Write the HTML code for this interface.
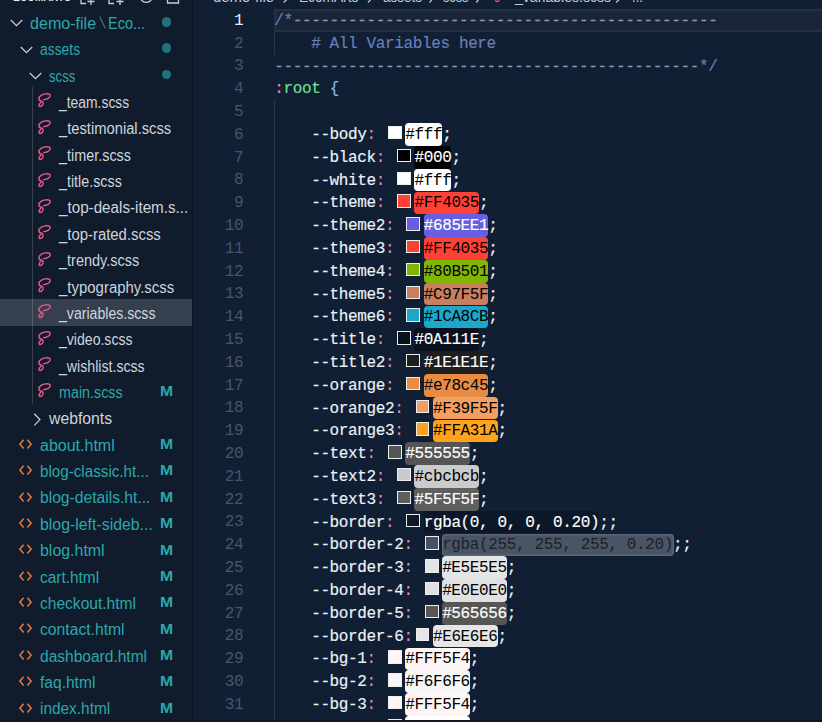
<!DOCTYPE html>
<html><head><meta charset="utf-8"><style>
*{margin:0;padding:0;box-sizing:border-box}
html,body{width:822px;height:722px;overflow:hidden;background:#101f34}
body{position:relative;font-family:"Liberation Sans",sans-serif}
#side{position:absolute;left:0;top:0;width:192px;height:722px;background:#101b2b;overflow:hidden}
#sep{position:absolute;left:192px;top:0;width:1px;height:722px;background:#0c1522}
#band{position:absolute;left:193px;top:0;width:8px;height:722px;background:#121e31}
#ed{position:absolute;left:193px;top:0;width:629px;height:722px;background:#101f34;overflow:hidden}
.row{position:absolute;left:0;width:191px;height:26.4px;font-size:15.6px;line-height:26.4px;white-space:nowrap;color:#cdd5de}
.selbg{position:absolute;left:0;width:192px;height:27px;background:#363f4d}
.row .t{position:absolute;top:2.5px}
.teal{color:#2ca8ad}
.dot{position:absolute;left:161.5px;top:8.8px;width:9.5px;height:9.5px;border-radius:50%;background:#1f747b}
.M{position:absolute;left:160px;top:0.9px;font-weight:bold;font-size:14.3px;color:#2ca8ad;transform:scaleX(1.1);transform-origin:0 0}
.ln{position:absolute;left:0;width:243.1px;text-align:right;font-family:"Liberation Mono",monospace;font-size:16px;letter-spacing:-0.42px;line-height:22.8px;color:#4a5568}
.ln.cur{color:#e8edf2}
.cl{position:absolute;left:274.2px;height:22.8px;font-family:"Liberation Mono",monospace;font-size:16px;letter-spacing:-0.366px;line-height:22.8px;white-space:pre;color:#d6deeb;-webkit-text-stroke:0.15px}
.cl .in{position:relative;top:0.8px}
.cm{color:#6980b8}
.dash{color:#8f9bb0}
.pk{color:#dd8cb8}
.gr{color:#6fe08a}
.bl{color:#86b6f2}
.vn{color:#eef2f6}
.sw{display:inline-block;vertical-align:top;width:13.4px;height:13.4px;margin:3px 3.4px 0 3.4px;border:1.7px solid #eee}
.hl{display:inline-block;vertical-align:top;height:22.8px;border-radius:3px}
.guide{position:absolute;width:1px;background:#2a3548}
</style></head>
<body>
<div id="side"><div style="position:absolute;left:13.4px;top:-8.7px;font-size:13px;font-weight:bold;color:#e6ebf0;line-height:11px;transform:scaleX(0.78);transform-origin:0 0">ECOMARTS</div><svg width="191" height="8" style="position:absolute;left:0;top:0"><g fill="none" stroke="#c5cdd6" stroke-width="1.3"><path d="M81 -4 V3.5 H86"/><path d="M91 -2 V5 M87.5 1.5 H94.5"/><path d="M109 -4 V3.5 H114"/><path d="M120 -2 V5 M116.5 1.5 H123.5"/><path d="M140.5 -2 A6 6 0 0 0 152 -2"/><path d="M167.5 -4 V3 H178.5 V-4"/></g></svg><div class="row" style="top:8.30px"><svg width="13" height="8" viewBox="0 0 13 8" style="position:absolute;top:10.9px;left:10.0px"><path d="M0.8 1 L6.5 6.7 L12.2 1" fill="none" stroke="#c5cdd6" stroke-width="1.3"/></svg><span class="t teal" style="left:29.80px;transform:scaleX(1.031);transform-origin:0 0">demo-file</span><svg width="10" height="20" style="position:absolute;left:97px;top:6px"><path d="M2.6 2.4 L8.4 14.6" stroke="#5a6575" stroke-width="1.2"/></svg><span class="t teal" style="left:107.5px;transform:scaleX(0.93);transform-origin:0 0">Eco...</span><span class="dot"></span></div><div class="row" style="top:34.67px"><svg width="13" height="8" viewBox="0 0 13 8" style="position:absolute;top:10.9px;left:19.5px"><path d="M0.8 1 L6.5 6.7 L12.2 1" fill="none" stroke="#c5cdd6" stroke-width="1.3"/></svg><span class="t teal" style="left:39.50px;transform:scaleX(0.891);transform-origin:0 0">assets</span><span class="dot"></span></div><div class="row" style="top:61.04px"><svg width="13" height="8" viewBox="0 0 13 8" style="position:absolute;top:10.9px;left:29.0px"><path d="M0.8 1 L6.5 6.7 L12.2 1" fill="none" stroke="#c5cdd6" stroke-width="1.3"/></svg><span class="t teal" style="left:48.80px;transform:scaleX(0.843);transform-origin:0 0">scss</span><span class="dot"></span></div><div class="row" style="top:87.41px"><svg width="20" height="24" viewBox="0 0 20 24" style="position:absolute;left:34px;top:0"><path d="M9.6 12.6 C12.6 12.4 16.6 10.8 16.2 8.4 C15.8 6.2 10.6 6.2 7.4 8.2 C4 10.4 4.2 13.8 7.6 14.2 C6.2 15.6 4.9 17.2 5.1 18.7 C5.3 20.1 7.3 19.7 8.5 18 C9.5 16.5 9.3 14.9 7.6 14.2" fill="none" stroke="#e2578a" stroke-width="1.45" stroke-linecap="round"/></svg><span class="t" style="left:59.40px;transform:scaleX(0.891);transform-origin:0 0">_team.scss</span></div><div class="row" style="top:113.78px"><svg width="20" height="24" viewBox="0 0 20 24" style="position:absolute;left:34px;top:0"><path d="M9.6 12.6 C12.6 12.4 16.6 10.8 16.2 8.4 C15.8 6.2 10.6 6.2 7.4 8.2 C4 10.4 4.2 13.8 7.6 14.2 C6.2 15.6 4.9 17.2 5.1 18.7 C5.3 20.1 7.3 19.7 8.5 18 C9.5 16.5 9.3 14.9 7.6 14.2" fill="none" stroke="#e2578a" stroke-width="1.45" stroke-linecap="round"/></svg><span class="t" style="left:59.40px;transform:scaleX(0.945);transform-origin:0 0">_testimonial.scss</span></div><div class="row" style="top:140.15px"><svg width="20" height="24" viewBox="0 0 20 24" style="position:absolute;left:34px;top:0"><path d="M9.6 12.6 C12.6 12.4 16.6 10.8 16.2 8.4 C15.8 6.2 10.6 6.2 7.4 8.2 C4 10.4 4.2 13.8 7.6 14.2 C6.2 15.6 4.9 17.2 5.1 18.7 C5.3 20.1 7.3 19.7 8.5 18 C9.5 16.5 9.3 14.9 7.6 14.2" fill="none" stroke="#e2578a" stroke-width="1.45" stroke-linecap="round"/></svg><span class="t" style="left:59.40px;transform:scaleX(0.923);transform-origin:0 0">_timer.scss</span></div><div class="row" style="top:166.52px"><svg width="20" height="24" viewBox="0 0 20 24" style="position:absolute;left:34px;top:0"><path d="M9.6 12.6 C12.6 12.4 16.6 10.8 16.2 8.4 C15.8 6.2 10.6 6.2 7.4 8.2 C4 10.4 4.2 13.8 7.6 14.2 C6.2 15.6 4.9 17.2 5.1 18.7 C5.3 20.1 7.3 19.7 8.5 18 C9.5 16.5 9.3 14.9 7.6 14.2" fill="none" stroke="#e2578a" stroke-width="1.45" stroke-linecap="round"/></svg><span class="t" style="left:59.40px;transform:scaleX(0.917);transform-origin:0 0">_title.scss</span></div><div class="row" style="top:192.89px"><svg width="20" height="24" viewBox="0 0 20 24" style="position:absolute;left:34px;top:0"><path d="M9.6 12.6 C12.6 12.4 16.6 10.8 16.2 8.4 C15.8 6.2 10.6 6.2 7.4 8.2 C4 10.4 4.2 13.8 7.6 14.2 C6.2 15.6 4.9 17.2 5.1 18.7 C5.3 20.1 7.3 19.7 8.5 18 C9.5 16.5 9.3 14.9 7.6 14.2" fill="none" stroke="#e2578a" stroke-width="1.45" stroke-linecap="round"/></svg><span class="t" style="left:59.40px;transform:scaleX(0.975);transform-origin:0 0">_top-deals-item.s...</span></div><div class="row" style="top:219.26px"><svg width="20" height="24" viewBox="0 0 20 24" style="position:absolute;left:34px;top:0"><path d="M9.6 12.6 C12.6 12.4 16.6 10.8 16.2 8.4 C15.8 6.2 10.6 6.2 7.4 8.2 C4 10.4 4.2 13.8 7.6 14.2 C6.2 15.6 4.9 17.2 5.1 18.7 C5.3 20.1 7.3 19.7 8.5 18 C9.5 16.5 9.3 14.9 7.6 14.2" fill="none" stroke="#e2578a" stroke-width="1.45" stroke-linecap="round"/></svg><span class="t" style="left:59.40px;transform:scaleX(0.955);transform-origin:0 0">_top-rated.scss</span></div><div class="row" style="top:245.63px"><svg width="20" height="24" viewBox="0 0 20 24" style="position:absolute;left:34px;top:0"><path d="M9.6 12.6 C12.6 12.4 16.6 10.8 16.2 8.4 C15.8 6.2 10.6 6.2 7.4 8.2 C4 10.4 4.2 13.8 7.6 14.2 C6.2 15.6 4.9 17.2 5.1 18.7 C5.3 20.1 7.3 19.7 8.5 18 C9.5 16.5 9.3 14.9 7.6 14.2" fill="none" stroke="#e2578a" stroke-width="1.45" stroke-linecap="round"/></svg><span class="t" style="left:59.40px;transform:scaleX(0.930);transform-origin:0 0">_trendy.scss</span></div><div class="row" style="top:272.00px"><svg width="20" height="24" viewBox="0 0 20 24" style="position:absolute;left:34px;top:0"><path d="M9.6 12.6 C12.6 12.4 16.6 10.8 16.2 8.4 C15.8 6.2 10.6 6.2 7.4 8.2 C4 10.4 4.2 13.8 7.6 14.2 C6.2 15.6 4.9 17.2 5.1 18.7 C5.3 20.1 7.3 19.7 8.5 18 C9.5 16.5 9.3 14.9 7.6 14.2" fill="none" stroke="#e2578a" stroke-width="1.45" stroke-linecap="round"/></svg><span class="t" style="left:59.40px;transform:scaleX(0.959);transform-origin:0 0">_typography.scss</span></div><div class="selbg" style="top:299.17px"></div><div class="row" style="top:298.37px"><svg width="20" height="24" viewBox="0 0 20 24" style="position:absolute;left:34px;top:0"><path d="M9.6 12.6 C12.6 12.4 16.6 10.8 16.2 8.4 C15.8 6.2 10.6 6.2 7.4 8.2 C4 10.4 4.2 13.8 7.6 14.2 C6.2 15.6 4.9 17.2 5.1 18.7 C5.3 20.1 7.3 19.7 8.5 18 C9.5 16.5 9.3 14.9 7.6 14.2" fill="none" stroke="#e2578a" stroke-width="1.45" stroke-linecap="round"/></svg><span class="t" style="left:59.40px;transform:scaleX(0.905);transform-origin:0 0">_variables.scss</span></div><div class="row" style="top:324.74px"><svg width="20" height="24" viewBox="0 0 20 24" style="position:absolute;left:34px;top:0"><path d="M9.6 12.6 C12.6 12.4 16.6 10.8 16.2 8.4 C15.8 6.2 10.6 6.2 7.4 8.2 C4 10.4 4.2 13.8 7.6 14.2 C6.2 15.6 4.9 17.2 5.1 18.7 C5.3 20.1 7.3 19.7 8.5 18 C9.5 16.5 9.3 14.9 7.6 14.2" fill="none" stroke="#e2578a" stroke-width="1.45" stroke-linecap="round"/></svg><span class="t" style="left:59.40px;transform:scaleX(0.902);transform-origin:0 0">_video.scss</span></div><div class="row" style="top:351.11px"><svg width="20" height="24" viewBox="0 0 20 24" style="position:absolute;left:34px;top:0"><path d="M9.6 12.6 C12.6 12.4 16.6 10.8 16.2 8.4 C15.8 6.2 10.6 6.2 7.4 8.2 C4 10.4 4.2 13.8 7.6 14.2 C6.2 15.6 4.9 17.2 5.1 18.7 C5.3 20.1 7.3 19.7 8.5 18 C9.5 16.5 9.3 14.9 7.6 14.2" fill="none" stroke="#e2578a" stroke-width="1.45" stroke-linecap="round"/></svg><span class="t" style="left:59.40px;transform:scaleX(0.907);transform-origin:0 0">_wishlist.scss</span></div><div class="row" style="top:377.48px"><svg width="20" height="24" viewBox="0 0 20 24" style="position:absolute;left:34px;top:0"><path d="M9.6 12.6 C12.6 12.4 16.6 10.8 16.2 8.4 C15.8 6.2 10.6 6.2 7.4 8.2 C4 10.4 4.2 13.8 7.6 14.2 C6.2 15.6 4.9 17.2 5.1 18.7 C5.3 20.1 7.3 19.7 8.5 18 C9.5 16.5 9.3 14.9 7.6 14.2" fill="none" stroke="#e2578a" stroke-width="1.45" stroke-linecap="round"/></svg><span class="t teal" style="left:59.10px;transform:scaleX(0.918);transform-origin:0 0">main.scss</span><span class="M">M</span></div><div class="row" style="top:403.85px"><svg width="9" height="14" viewBox="0 0 9 14" style="position:absolute;top:9px;left:33px"><path d="M1.3 0.8 L6.9 6.6 L1.3 12.4" fill="none" stroke="#c5cdd6" stroke-width="1.3"/></svg><span class="t" style="left:49.10px;transform:scaleX(1.011);transform-origin:0 0">webfonts</span></div><div class="row" style="top:430.22px"><svg width="13" height="11" viewBox="0 0 13 11" style="position:absolute;left:19px;top:8.6px"><path d="M4.6 0.8 L0.9 5.2 L4.6 9.6 M8.4 0.8 L12.1 5.2 L8.4 9.6" fill="none" stroke="#e37a3f" stroke-width="1.5"/></svg><span class="t teal" style="left:40.00px;transform:scaleX(1.026);transform-origin:0 0">about.html</span><span class="M">M</span></div><div class="row" style="top:456.59px"><svg width="13" height="11" viewBox="0 0 13 11" style="position:absolute;left:19px;top:8.6px"><path d="M4.6 0.8 L0.9 5.2 L4.6 9.6 M8.4 0.8 L12.1 5.2 L8.4 9.6" fill="none" stroke="#e37a3f" stroke-width="1.5"/></svg><span class="t teal" style="left:40.00px;transform:scaleX(0.974);transform-origin:0 0">blog-classic.ht...</span><span class="M">M</span></div><div class="row" style="top:482.96px"><svg width="13" height="11" viewBox="0 0 13 11" style="position:absolute;left:19px;top:8.6px"><path d="M4.6 0.8 L0.9 5.2 L4.6 9.6 M8.4 0.8 L12.1 5.2 L8.4 9.6" fill="none" stroke="#e37a3f" stroke-width="1.5"/></svg><span class="t teal" style="left:40.00px;transform:scaleX(1.003);transform-origin:0 0">blog-details.ht...</span><span class="M">M</span></div><div class="row" style="top:509.33px"><svg width="13" height="11" viewBox="0 0 13 11" style="position:absolute;left:19px;top:8.6px"><path d="M4.6 0.8 L0.9 5.2 L4.6 9.6 M8.4 0.8 L12.1 5.2 L8.4 9.6" fill="none" stroke="#e37a3f" stroke-width="1.5"/></svg><span class="t teal" style="left:40.00px;transform:scaleX(1.017);transform-origin:0 0">blog-left-sideb...</span><span class="M">M</span></div><div class="row" style="top:535.70px"><svg width="13" height="11" viewBox="0 0 13 11" style="position:absolute;left:19px;top:8.6px"><path d="M4.6 0.8 L0.9 5.2 L4.6 9.6 M8.4 0.8 L12.1 5.2 L8.4 9.6" fill="none" stroke="#e37a3f" stroke-width="1.5"/></svg><span class="t teal" style="left:40.00px;transform:scaleX(1.021);transform-origin:0 0">blog.html</span><span class="M">M</span></div><div class="row" style="top:562.07px"><svg width="13" height="11" viewBox="0 0 13 11" style="position:absolute;left:19px;top:8.6px"><path d="M4.6 0.8 L0.9 5.2 L4.6 9.6 M8.4 0.8 L12.1 5.2 L8.4 9.6" fill="none" stroke="#e37a3f" stroke-width="1.5"/></svg><span class="t teal" style="left:40.00px;transform:scaleX(0.988);transform-origin:0 0">cart.html</span><span class="M">M</span></div><div class="row" style="top:588.44px"><svg width="13" height="11" viewBox="0 0 13 11" style="position:absolute;left:19px;top:8.6px"><path d="M4.6 0.8 L0.9 5.2 L4.6 9.6 M8.4 0.8 L12.1 5.2 L8.4 9.6" fill="none" stroke="#e37a3f" stroke-width="1.5"/></svg><span class="t teal" style="left:40.00px;transform:scaleX(0.998);transform-origin:0 0">checkout.html</span><span class="M">M</span></div><div class="row" style="top:614.81px"><svg width="13" height="11" viewBox="0 0 13 11" style="position:absolute;left:19px;top:8.6px"><path d="M4.6 0.8 L0.9 5.2 L4.6 9.6 M8.4 0.8 L12.1 5.2 L8.4 9.6" fill="none" stroke="#e37a3f" stroke-width="1.5"/></svg><span class="t teal" style="left:40.00px;transform:scaleX(1.006);transform-origin:0 0">contact.html</span><span class="M">M</span></div><div class="row" style="top:641.18px"><svg width="13" height="11" viewBox="0 0 13 11" style="position:absolute;left:19px;top:8.6px"><path d="M4.6 0.8 L0.9 5.2 L4.6 9.6 M8.4 0.8 L12.1 5.2 L8.4 9.6" fill="none" stroke="#e37a3f" stroke-width="1.5"/></svg><span class="t teal" style="left:40.00px;transform:scaleX(0.996);transform-origin:0 0">dashboard.html</span><span class="M">M</span></div><div class="row" style="top:667.55px"><svg width="13" height="11" viewBox="0 0 13 11" style="position:absolute;left:19px;top:8.6px"><path d="M4.6 0.8 L0.9 5.2 L4.6 9.6 M8.4 0.8 L12.1 5.2 L8.4 9.6" fill="none" stroke="#e37a3f" stroke-width="1.5"/></svg><span class="t teal" style="left:40.00px;transform:scaleX(0.998);transform-origin:0 0">faq.html</span><span class="M">M</span></div><div class="row" style="top:693.92px"><svg width="13" height="11" viewBox="0 0 13 11" style="position:absolute;left:19px;top:8.6px"><path d="M4.6 0.8 L0.9 5.2 L4.6 9.6 M8.4 0.8 L12.1 5.2 L8.4 9.6" fill="none" stroke="#e37a3f" stroke-width="1.5"/></svg><span class="t teal" style="left:40.00px;transform:scaleX(0.987);transform-origin:0 0">index.html</span><span class="M">M</span></div><div class="guide" style="left:32px;top:87.4px;height:316.4px;background:rgba(255,255,255,0.17);z-index:2"></div></div>
<div id="sep"></div><div style="position:absolute;left:0;top:720px;width:822px;height:2px;background:#0d1624;z-index:5"></div>
<div id="ed"><div id="band2" style="position:absolute;left:0;top:0;width:8px;height:722px;background:#121e31"></div><div style="position:absolute;left:19.8px;top:-11px;font-size:14px;line-height:16px;color:#c3cbd4;white-space:nowrap;transform:scaleX(1.061);transform-origin:0 0">demo-file</div><div style="position:absolute;left:106.2px;top:-11px;font-size:14px;line-height:16px;color:#c3cbd4;white-space:nowrap;transform:scaleX(0.977);transform-origin:0 0">EcomArts</div><div style="position:absolute;left:189.8px;top:-11px;font-size:14px;line-height:16px;color:#c3cbd4;white-space:nowrap;transform:scaleX(0.961);transform-origin:0 0">assets</div><div style="position:absolute;left:250.0px;top:-11px;font-size:14px;line-height:16px;color:#c3cbd4;white-space:nowrap;transform:scaleX(0.907);transform-origin:0 0">scss</div><div style="position:absolute;left:322.0px;top:-11px;font-size:14px;line-height:16px;color:#c3cbd4;white-space:nowrap;transform:scaleX(1.003);transform-origin:0 0">_variables.scss</div><div style="position:absolute;left:438.8px;top:-11px;font-size:14px;line-height:16px;color:#c3cbd4;white-space:nowrap;transform:scaleX(0.934);transform-origin:0 0">...</div><svg width="629" height="10" style="position:absolute;left:0;top:0"><g fill="none" stroke="#b9c2cc" stroke-width="1.3"><path d="M90.6 2.5 L95.5 -2"/><path d="M175.0 2.5 L179.0 -2"/><path d="M236.5 2.5 L240.4 -2"/><path d="M283.2 2.5 L287.0 -2"/><path d="M423.0 2.5 L427.8 -2"/></g><path d="M302.6 -1 C302.0 2.5 306.5 2.5 306.0 -1" fill="none" stroke="#e2578a" stroke-width="1.3"/></svg><div style="position:absolute;left:81px;top:9.1px;width:700px;height:23.4px;border:2px solid #243044;border-right:none;background:#1a2538"></div><div class="ln cur" style="top:9.80px;left:-193px">1</div><div class="ln" style="top:32.60px;left:-193px">2</div><div class="ln" style="top:55.40px;left:-193px">3</div><div class="ln" style="top:78.20px;left:-193px">4</div><div class="ln" style="top:101.00px;left:-193px">5</div><div class="ln" style="top:123.80px;left:-193px">6</div><div class="ln" style="top:146.60px;left:-193px">7</div><div class="ln" style="top:169.40px;left:-193px">8</div><div class="ln" style="top:192.20px;left:-193px">9</div><div class="ln" style="top:215.00px;left:-193px">10</div><div class="ln" style="top:237.80px;left:-193px">11</div><div class="ln" style="top:260.60px;left:-193px">12</div><div class="ln" style="top:283.40px;left:-193px">13</div><div class="ln" style="top:306.20px;left:-193px">14</div><div class="ln" style="top:329.00px;left:-193px">15</div><div class="ln" style="top:351.80px;left:-193px">16</div><div class="ln" style="top:374.60px;left:-193px">17</div><div class="ln" style="top:397.40px;left:-193px">18</div><div class="ln" style="top:420.20px;left:-193px">19</div><div class="ln" style="top:443.00px;left:-193px">20</div><div class="ln" style="top:465.80px;left:-193px">21</div><div class="ln" style="top:488.60px;left:-193px">22</div><div class="ln" style="top:511.40px;left:-193px">23</div><div class="ln" style="top:534.20px;left:-193px">24</div><div class="ln" style="top:557.00px;left:-193px">25</div><div class="ln" style="top:579.80px;left:-193px">26</div><div class="ln" style="top:602.60px;left:-193px">27</div><div class="ln" style="top:625.40px;left:-193px">28</div><div class="ln" style="top:648.20px;left:-193px">29</div><div class="ln" style="top:671.00px;left:-193px">30</div><div class="ln" style="top:693.80px;left:-193px">31</div><div class="guide" style="left:81px;top:31.9px;height:22.8px"></div><div class="guide" style="left:81px;top:100.3px;height:638.4px"></div><div class="cl" style="top:9.90px;left:81.20px"><span class="cm">/*</span><span class="dash">----------------------------------------------</span></div><div class="cl" style="top:32.70px;left:81.20px"><span class="cm">    # All Variables here</span></div><div class="cl" style="top:55.50px;left:81.20px"><span class="dash">----------------------------------------------</span><span class="cm">*/</span></div><div class="cl" style="top:78.30px;left:81.20px"><span class="pk">:</span><span class="gr">root</span> <span class="bl">{</span></div><div style="position:absolute;left:195.01px;top:125.90px;width:13.7px;height:13.6px;border:1.6px solid #eee;background:#fff"></div><div style="position:absolute;left:212.21px;top:123.10px;width:36.94px;height:22.80px;border-radius:4px;background:#fff"></div><div class="cl" style="top:123.90px;left:81.20px">    <span class="vn">--body</span><span class="pk">:</span></div><div class="cl" style="top:123.90px;left:212.21px"><span style="color:#000;-webkit-text-stroke:0px">#fff</span><span class="vn">;</span></div><div style="position:absolute;left:204.24px;top:148.70px;width:13.7px;height:13.6px;border:1.6px solid #eee;background:#000"></div><div style="position:absolute;left:221.44px;top:145.90px;width:36.94px;height:22.80px;border-radius:4px;background:#000"></div><div class="cl" style="top:146.70px;left:81.20px">    <span class="vn">--black</span><span class="pk">:</span></div><div class="cl" style="top:146.70px;left:221.44px"><span style="color:#fff;-webkit-text-stroke:0.15px">#000</span><span class="vn">;</span></div><div style="position:absolute;left:204.24px;top:171.50px;width:13.7px;height:13.6px;border:1.6px solid #eee;background:#fff"></div><div style="position:absolute;left:221.44px;top:168.70px;width:36.94px;height:22.80px;border-radius:4px;background:#fff"></div><div class="cl" style="top:169.50px;left:81.20px">    <span class="vn">--white</span><span class="pk">:</span></div><div class="cl" style="top:169.50px;left:221.44px"><span style="color:#000;-webkit-text-stroke:0px">#fff</span><span class="vn">;</span></div><div style="position:absolute;left:204.24px;top:194.30px;width:13.7px;height:13.6px;border:1.6px solid #eee;background:#FF4035"></div><div style="position:absolute;left:221.44px;top:191.50px;width:64.64px;height:22.80px;border-radius:4px;background:#FF4035"></div><div class="cl" style="top:192.30px;left:81.20px">    <span class="vn">--theme</span><span class="pk">:</span></div><div class="cl" style="top:192.30px;left:221.44px"><span style="color:#000;-webkit-text-stroke:0px">#FF4035</span><span class="vn">;</span></div><div style="position:absolute;left:213.48px;top:217.10px;width:13.7px;height:13.6px;border:1.6px solid #eee;background:#685EE1"></div><div style="position:absolute;left:230.68px;top:214.30px;width:64.64px;height:22.80px;border-radius:4px;background:#685EE1"></div><div class="cl" style="top:215.10px;left:81.20px">    <span class="vn">--theme2</span><span class="pk">:</span></div><div class="cl" style="top:215.10px;left:230.68px"><span style="color:#fff;-webkit-text-stroke:0.15px">#685EE1</span><span class="vn">;</span></div><div style="position:absolute;left:213.48px;top:239.90px;width:13.7px;height:13.6px;border:1.6px solid #eee;background:#FF4035"></div><div style="position:absolute;left:230.68px;top:237.10px;width:64.64px;height:22.80px;border-radius:4px;background:#FF4035"></div><div class="cl" style="top:237.90px;left:81.20px">    <span class="vn">--theme3</span><span class="pk">:</span></div><div class="cl" style="top:237.90px;left:230.68px"><span style="color:#000;-webkit-text-stroke:0px">#FF4035</span><span class="vn">;</span></div><div style="position:absolute;left:213.48px;top:262.70px;width:13.7px;height:13.6px;border:1.6px solid #eee;background:#80B501"></div><div style="position:absolute;left:230.68px;top:259.90px;width:64.64px;height:22.80px;border-radius:4px;background:#80B501"></div><div class="cl" style="top:260.70px;left:81.20px">    <span class="vn">--theme4</span><span class="pk">:</span></div><div class="cl" style="top:260.70px;left:230.68px"><span style="color:#000;-webkit-text-stroke:0px">#80B501</span><span class="vn">;</span></div><div style="position:absolute;left:213.48px;top:285.50px;width:13.7px;height:13.6px;border:1.6px solid #eee;background:#C97F5F"></div><div style="position:absolute;left:230.68px;top:282.70px;width:64.64px;height:22.80px;border-radius:4px;background:#C97F5F"></div><div class="cl" style="top:283.50px;left:81.20px">    <span class="vn">--theme5</span><span class="pk">:</span></div><div class="cl" style="top:283.50px;left:230.68px"><span style="color:#000;-webkit-text-stroke:0px">#C97F5F</span><span class="vn">;</span></div><div style="position:absolute;left:213.48px;top:308.30px;width:13.7px;height:13.6px;border:1.6px solid #eee;background:#1CA8CB"></div><div style="position:absolute;left:230.68px;top:305.50px;width:64.64px;height:22.80px;border-radius:4px;background:#1CA8CB"></div><div class="cl" style="top:306.30px;left:81.20px">    <span class="vn">--theme6</span><span class="pk">:</span></div><div class="cl" style="top:306.30px;left:230.68px"><span style="color:#000;-webkit-text-stroke:0px">#1CA8CB</span><span class="vn">;</span></div><div style="position:absolute;left:204.24px;top:331.10px;width:13.7px;height:13.6px;border:1.6px solid #eee;background:#0A111E"></div><div style="position:absolute;left:221.44px;top:328.30px;width:64.64px;height:22.80px;border-radius:4px;background:#0A111E"></div><div class="cl" style="top:329.10px;left:81.20px">    <span class="vn">--title</span><span class="pk">:</span></div><div class="cl" style="top:329.10px;left:221.44px"><span style="color:#fff;-webkit-text-stroke:0.15px">#0A111E</span><span class="vn">;</span></div><div style="position:absolute;left:213.48px;top:353.90px;width:13.7px;height:13.6px;border:1.6px solid #eee;background:#1E1E1E"></div><div style="position:absolute;left:230.68px;top:351.10px;width:64.64px;height:22.80px;border-radius:4px;background:#1E1E1E"></div><div class="cl" style="top:351.90px;left:81.20px">    <span class="vn">--title2</span><span class="pk">:</span></div><div class="cl" style="top:351.90px;left:230.68px"><span style="color:#fff;-webkit-text-stroke:0.15px">#1E1E1E</span><span class="vn">;</span></div><div style="position:absolute;left:213.48px;top:376.70px;width:13.7px;height:13.6px;border:1.6px solid #eee;background:#e78c45"></div><div style="position:absolute;left:230.68px;top:373.90px;width:64.64px;height:22.80px;border-radius:4px;background:#e78c45"></div><div class="cl" style="top:374.70px;left:81.20px">    <span class="vn">--orange</span><span class="pk">:</span></div><div class="cl" style="top:374.70px;left:230.68px"><span style="color:#000;-webkit-text-stroke:0px">#e78c45</span><span class="vn">;</span></div><div style="position:absolute;left:222.71px;top:399.50px;width:13.7px;height:13.6px;border:1.6px solid #eee;background:#F39F5F"></div><div style="position:absolute;left:239.91px;top:396.70px;width:64.64px;height:22.80px;border-radius:4px;background:#F39F5F"></div><div class="cl" style="top:397.50px;left:81.20px">    <span class="vn">--orange2</span><span class="pk">:</span></div><div class="cl" style="top:397.50px;left:239.91px"><span style="color:#000;-webkit-text-stroke:0px">#F39F5F</span><span class="vn">;</span></div><div style="position:absolute;left:222.71px;top:422.30px;width:13.7px;height:13.6px;border:1.6px solid #eee;background:#FFA31A"></div><div style="position:absolute;left:239.91px;top:419.50px;width:64.64px;height:22.80px;border-radius:4px;background:#FFA31A"></div><div class="cl" style="top:420.30px;left:81.20px">    <span class="vn">--orange3</span><span class="pk">:</span></div><div class="cl" style="top:420.30px;left:239.91px"><span style="color:#000;-webkit-text-stroke:0px">#FFA31A</span><span class="vn">;</span></div><div style="position:absolute;left:195.01px;top:445.10px;width:13.7px;height:13.6px;border:1.6px solid #eee;background:#555555"></div><div style="position:absolute;left:212.21px;top:442.30px;width:64.64px;height:22.80px;border-radius:4px;background:#555555"></div><div class="cl" style="top:443.10px;left:81.20px">    <span class="vn">--text</span><span class="pk">:</span></div><div class="cl" style="top:443.10px;left:212.21px"><span style="color:#fff;-webkit-text-stroke:0.15px">#555555</span><span class="vn">;</span></div><div style="position:absolute;left:204.24px;top:467.90px;width:13.7px;height:13.6px;border:1.6px solid #eee;background:#cbcbcb"></div><div style="position:absolute;left:221.44px;top:465.10px;width:64.64px;height:22.80px;border-radius:4px;background:#cbcbcb"></div><div class="cl" style="top:465.90px;left:81.20px">    <span class="vn">--text2</span><span class="pk">:</span></div><div class="cl" style="top:465.90px;left:221.44px"><span style="color:#000;-webkit-text-stroke:0px">#cbcbcb</span><span class="vn">;</span></div><div style="position:absolute;left:204.24px;top:490.70px;width:13.7px;height:13.6px;border:1.6px solid #eee;background:#5F5F5F"></div><div style="position:absolute;left:221.44px;top:487.90px;width:64.64px;height:22.80px;border-radius:4px;background:#5F5F5F"></div><div class="cl" style="top:488.70px;left:81.20px">    <span class="vn">--text3</span><span class="pk">:</span></div><div class="cl" style="top:488.70px;left:221.44px"><span style="color:#fff;-webkit-text-stroke:0.15px">#5F5F5F</span><span class="vn">;</span></div><div style="position:absolute;left:213.48px;top:513.50px;width:13.7px;height:13.6px;border:1.6px solid #eee;background:#0e1829"></div><div style="position:absolute;left:230.68px;top:510.70px;width:175.45px;height:22.80px;border-radius:4px;background:#0c1829"></div><div class="cl" style="top:511.50px;left:81.20px">    <span class="vn">--border</span><span class="pk">:</span></div><div class="cl" style="top:511.50px;left:230.68px"><span style="color:#fff;-webkit-text-stroke:0.15px">rgba(0, 0, 0, 0.20)</span><span class="vn">;;</span></div><div style="position:absolute;left:231.94px;top:536.30px;width:13.7px;height:13.6px;border:1.6px solid #eee;background:#485262"></div><div style="position:absolute;left:249.14px;top:533.50px;width:232.35px;height:22.80px;border-radius:4px;background:#4a5464;box-shadow:inset 0 0 0 1.4px #5b6575"></div><div class="cl" style="top:534.30px;left:81.20px">    <span class="vn">--border-2</span><span class="pk">:</span></div><div class="cl" style="top:534.30px;left:249.14px"><span style="color:#1a212c;-webkit-text-stroke:0px">rgba(255, 255, 255, 0.20)</span><span class="vn">;;</span></div><div style="position:absolute;left:231.94px;top:559.10px;width:13.7px;height:13.6px;border:1.6px solid #eee;background:#E5E5E5"></div><div style="position:absolute;left:249.14px;top:556.30px;width:64.64px;height:22.80px;border-radius:4px;background:#E5E5E5"></div><div class="cl" style="top:557.10px;left:81.20px">    <span class="vn">--border-3</span><span class="pk">:</span></div><div class="cl" style="top:557.10px;left:249.14px"><span style="color:#000;-webkit-text-stroke:0px">#E5E5E5</span><span class="vn">;</span></div><div style="position:absolute;left:231.94px;top:581.90px;width:13.7px;height:13.6px;border:1.6px solid #eee;background:#E0E0E0"></div><div style="position:absolute;left:249.14px;top:579.10px;width:64.64px;height:22.80px;border-radius:4px;background:#E0E0E0"></div><div class="cl" style="top:579.90px;left:81.20px">    <span class="vn">--border-4</span><span class="pk">:</span></div><div class="cl" style="top:579.90px;left:249.14px"><span style="color:#000;-webkit-text-stroke:0px">#E0E0E0</span><span class="vn">;</span></div><div style="position:absolute;left:231.94px;top:604.70px;width:13.7px;height:13.6px;border:1.6px solid #eee;background:#565656"></div><div style="position:absolute;left:249.14px;top:601.90px;width:64.64px;height:22.80px;border-radius:4px;background:#565656"></div><div class="cl" style="top:602.70px;left:81.20px">    <span class="vn">--border-5</span><span class="pk">:</span></div><div class="cl" style="top:602.70px;left:249.14px"><span style="color:#fff;-webkit-text-stroke:0.15px">#565656</span><span class="vn">;</span></div><div style="position:absolute;left:222.71px;top:627.50px;width:13.7px;height:13.6px;border:1.6px solid #eee;background:#E6E6E6"></div><div style="position:absolute;left:239.91px;top:624.70px;width:64.64px;height:22.80px;border-radius:4px;background:#E6E6E6"></div><div class="cl" style="top:625.50px;left:81.20px">    <span class="vn">--border-6</span><span class="pk">:</span></div><div class="cl" style="top:625.50px;left:239.91px"><span style="color:#000;-webkit-text-stroke:0px">#E6E6E6</span><span class="vn">;</span></div><div style="position:absolute;left:195.01px;top:650.30px;width:13.7px;height:13.6px;border:1.6px solid #eee;background:#FFF5F4"></div><div style="position:absolute;left:212.21px;top:647.50px;width:64.64px;height:22.80px;border-radius:4px;background:#FFF5F4"></div><div class="cl" style="top:648.30px;left:81.20px">    <span class="vn">--bg-1</span><span class="pk">:</span></div><div class="cl" style="top:648.30px;left:212.21px"><span style="color:#000;-webkit-text-stroke:0px">#FFF5F4</span><span class="vn">;</span></div><div style="position:absolute;left:195.01px;top:673.10px;width:13.7px;height:13.6px;border:1.6px solid #eee;background:#F6F6F6"></div><div style="position:absolute;left:212.21px;top:670.30px;width:64.64px;height:22.80px;border-radius:4px;background:#F6F6F6"></div><div class="cl" style="top:671.10px;left:81.20px">    <span class="vn">--bg-2</span><span class="pk">:</span></div><div class="cl" style="top:671.10px;left:212.21px"><span style="color:#000;-webkit-text-stroke:0px">#F6F6F6</span><span class="vn">;</span></div><div style="position:absolute;left:195.01px;top:695.90px;width:13.7px;height:13.6px;border:1.6px solid #eee;background:#FFF5F4"></div><div style="position:absolute;left:212.21px;top:693.10px;width:64.64px;height:22.80px;border-radius:4px;background:#FFF5F4"></div><div class="cl" style="top:693.90px;left:81.20px">    <span class="vn">--bg-3</span><span class="pk">:</span></div><div class="cl" style="top:693.90px;left:212.21px"><span style="color:#000;-webkit-text-stroke:0px">#FFF5F4</span><span class="vn">;</span></div><div style="position:absolute;left:195.01px;top:718.70px;width:13.7px;height:13.6px;border:1.6px solid #eee;background:#101f34"></div><div style="position:absolute;left:212.21px;top:715.90px;width:64.64px;height:22.80px;border-radius:4px;background:#FFFFFF"></div></div>
</body></html>
